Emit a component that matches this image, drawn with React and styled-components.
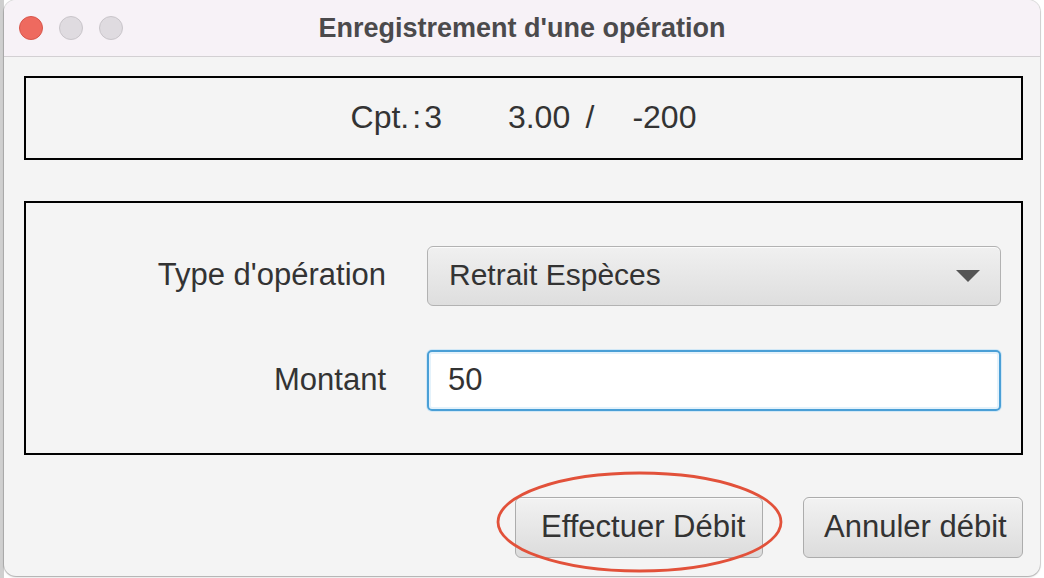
import React, { useState } from 'react';
import styled, { createGlobalStyle } from 'styled-components';

const GlobalStyle = createGlobalStyle`
  html, body {
    margin: 0;
    padding: 0;
    width: 1044px;
    height: 578px;
    overflow: hidden;
    background: linear-gradient(90deg, #cfcfcf 0, #cfcfcf 4px, #ffffff 4px);
    font-family: "Liberation Sans", Arial, sans-serif;
  }
`;

const Page = styled.div`
  display: flex;
  padding-left: 4px;
  height: 578px;
  box-sizing: border-box;
`;

const Window = styled.div`
  width: 1036px;
  height: 576px;
  display: flex;
  flex-direction: column;
  background: #f4f4f4;
  border-radius: 12px;
  overflow: hidden;
  box-shadow: 0 0 0 1px rgba(0, 0, 0, 0.12), 0 1px 2px rgba(0, 0, 0, 0.25);
`;

const TitleBar = styled.div`
  height: 56px;
  flex-shrink: 0;
  display: grid;
  grid-template-columns: 1fr auto 1fr;
  align-items: center;
  background: #f7f2f7;
  border-bottom: 1px solid #d3d0d3;
`;

const Lights = styled.div`
  display: flex;
  gap: 16px;
  padding-left: 15px;
`;

const Light = styled.span`
  width: 24px;
  height: 24px;
  border-radius: 50%;
  background: ${(p) => (p.$red ? '#ee6a5f' : '#dfdbe0')};
  border: 1px solid ${(p) => (p.$red ? '#d8564b' : '#c9c5ca')};
  box-sizing: border-box;
`;

const Title = styled.div`
  font-size: 27px;
  font-weight: 700;
  color: #4b4a4c;
  padding-top: 1px;
`;

const Content = styled.div`
  flex: 1;
  display: flex;
  flex-direction: column;
  padding: 19px 17px 0 20px;
`;

const Frame = styled.div`
  border: 2px solid #000;
  box-sizing: border-box;
`;

const InfoBox = styled(Frame)`
  height: 84px;
  display: flex;
  align-items: center;
  justify-content: center;
  font-size: 32px;
  color: #333;
  padding: 0 0 2px 0;
`;

const InfoItem = styled.span`
  margin-right: ${(p) => p.$gap || 0}px;
  white-space: pre;
`;

const Colon = styled.span`
  margin: 0 3px;
`;

const FormBox = styled(Frame)`
  margin-top: 41px;
  height: 254px;
  display: grid;
  grid-template-columns: 360px 574px;
  column-gap: 41px;
  row-gap: 44px;
  align-content: start;
  padding-top: 43px;
`;

const Label = styled.label`
  font-size: 31px;
  color: #333;
  text-align: right;
  align-self: center;
  padding-bottom: 2px;
`;

const Combo = styled.div`
  height: 60px;
  box-sizing: border-box;
  display: flex;
  align-items: center;
  justify-content: space-between;
  padding: 0 20px 2px 21px;
  border: 1px solid #b2b2b2;
  border-radius: 6px;
  background: linear-gradient(180deg, #f0f0f0 0%, #dedede 100%);
  box-shadow: inset 0 1px 0 #fbfbfb;
  font-size: 30px;
  color: #333;
`;

const Arrow = styled.span`
  width: 0;
  height: 0;
  border-left: 12px solid transparent;
  border-right: 12px solid transparent;
  border-top: 12px solid #555;
  margin-top: 2px;
`;

const Field = styled.input`
  height: 61px;
  box-sizing: border-box;
  width: 100%;
  padding: 0 19px 2px;
  border: 2px solid #4a9fd6;
  border-radius: 5px;
  background: #fff;
  box-shadow: 0 0 0 1px #d2e8f6, inset 0 0 0 2px #e4f2fb;
  font-family: inherit;
  font-size: 31px;
  color: #333;
  outline: none;
`;

const ButtonRow = styled.div`
  margin-top: 42px;
  display: flex;
  justify-content: flex-end;
  gap: 40px;
`;

const Marked = styled.div`
  position: relative;
  display: flex;
`;

const Ring = styled.svg`
  position: absolute;
  left: -19px;
  top: -26px;
  width: 287px;
  height: 102px;
  pointer-events: none;
  overflow: visible;
`;

const Button = styled.button`
  height: 61px;
  width: ${(p) => p.$w}px;
  box-sizing: border-box;
  padding: 0 0 2px ${(p) => p.$pad}px;
  text-align: left;
  white-space: nowrap;
  overflow: hidden;
  border: 1px solid #acacac;
  border-radius: 6px;
  background: linear-gradient(180deg, #f2f2f2 0%, #dcdcdc 100%);
  box-shadow: inset 0 1px 0 #fafafa;
  font-family: inherit;
  font-size: 31px;
  color: #333;
`;

const App = () => {
  const [amount, setAmount] = useState('50');

  return (
    <>
      <GlobalStyle />
      <Page>
        <Window>
          <TitleBar>
            <Lights>
              <Light $red />
              <Light />
              <Light />
            </Lights>
            <Title>Enregistrement d'une opération</Title>
            <div />
          </TitleBar>
          <Content>
            <InfoBox>
              <InfoItem $gap={66}>
                Cpt.<Colon>:</Colon>3
              </InfoItem>
              <InfoItem $gap={38}>{'3.00 \u2009/'}</InfoItem>
              <InfoItem>-200</InfoItem>
            </InfoBox>
            <FormBox>
              <Label>Type d'opération</Label>
              <Combo>
                <span>Retrait Espèces</span>
                <Arrow />
              </Combo>
              <Label>Montant</Label>
              <Field value={amount} onChange={(e) => setAmount(e.target.value)} />
            </FormBox>
            <ButtonRow>
              <Marked>
                <Button $w={248} $pad={25}>Effectuer Débit</Button>
                <Ring viewBox="0 0 287 102">
                  <ellipse cx="143.5" cy="51" rx="141.5" ry="49" fill="none" stroke="#e2513a" strokeWidth="2.8" />
                </Ring>
              </Marked>
              <Button $w={220} $pad={20}>Annuler débit</Button>
            </ButtonRow>
          </Content>
        </Window>
      </Page>
    </>
  );
};

export default App;
